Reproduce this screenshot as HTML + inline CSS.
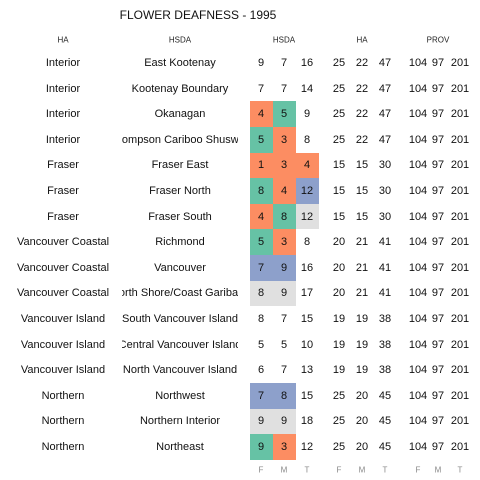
<!DOCTYPE html><html><head><style>
body{margin:0;width:480px;height:480px;background:#fff;font-family:"Liberation Sans",sans-serif;position:relative;overflow:hidden}
.a{position:absolute;white-space:nowrap;text-align:center;transform:translate(-50%,-50%)}
.h{font-size:8px;color:#222}
.d{font-size:11px;color:#111}
.c{position:absolute;width:23px;height:25.6px}
.f{font-size:8px;color:#888}
.clip{position:absolute;overflow:hidden;height:20px}
.clip span{position:absolute;left:50%;top:50%;transform:translate(-50%,-50%);white-space:nowrap;font-size:11px;color:#111}
</style></head><body>
<div class="a" style="left:198px;top:15px;font-size:12px;color:#111">FLOWER DEAFNESS - 1995</div>
<div id="g"></div>
<script>
var rows=[["Interior","East Kootenay",9,7,16,25,22,47,"---"],
["Interior","Kootenay Boundary",7,7,14,25,22,47,"---"],
["Interior","Okanagan",4,5,9,25,22,47,"OG-"],
["Interior","Thompson Cariboo Shuswap",5,3,8,25,22,47,"GO-"],
["Fraser","Fraser East",1,3,4,15,15,30,"OOO"],
["Fraser","Fraser North",8,4,12,15,15,30,"GOB"],
["Fraser","Fraser South",4,8,12,15,15,30,"OGY"],
["Vancouver Coastal","Richmond",5,3,8,20,21,41,"GO-"],
["Vancouver Coastal","Vancouver",7,9,16,20,21,41,"BB-"],
["Vancouver Coastal","North Shore/Coast Garibaldi",8,9,17,20,21,41,"YY-"],
["Vancouver Island","South Vancouver Island",8,7,15,19,19,38,"---"],
["Vancouver Island","Central Vancouver Island",5,5,10,19,19,38,"---"],
["Vancouver Island","North Vancouver Island",6,7,13,19,19,38,"---"],
["Northern","Northwest",7,8,15,25,20,45,"BB-"],
["Northern","Northern Interior",9,9,18,25,20,45,"YY-"],
["Northern","Northeast",9,3,12,25,20,45,"GO-"]];
var col={O:"#fc8d62",G:"#66c2a5",B:"#8da0cb",Y:"#e0e0e0"};
var xs=[261,284,307,339,362,385,418,438,460];
var h='';
[["HA",63],["HSDA",180],["HSDA",284],["HA",362],["PROV",438]].forEach(function(p){h+='<div class="a h" style="left:'+p[1]+'px;top:40px">'+p[0]+'</div>'});
rows.forEach(function(r,i){var y=63+i*25.6;
var v=[r[2],r[3],r[4],r[5],r[6],r[7],104,97,201];
for(var k=0;k<3;k++){var c=r[8][k];if(c!="-")h+='<div class="c" style="left:'+(250+k*23)+'px;top:'+(y-12.8)+'px;background:'+col[c]+'"></div>';}
h+='<div class="clip" style="left:0;width:122px;top:'+(y-10)+'px"><span style="left:63px">'+r[0]+'</span></div>';
h+='<div class="clip" style="left:122px;width:116px;top:'+(y-10)+'px"><span>'+r[1]+'</span></div>';
for(var j=0;j<9;j++)h+='<div class="a d" style="left:'+xs[j]+'px;top:'+y+'px">'+v[j]+'</div>';});
["F","M","T","F","M","T","F","M","T"].forEach(function(t,j){h+='<div class="a f" style="left:'+xs[j]+'px;top:470px">'+t+'</div>'});
document.getElementById('g').innerHTML=h;
</script></body></html>
